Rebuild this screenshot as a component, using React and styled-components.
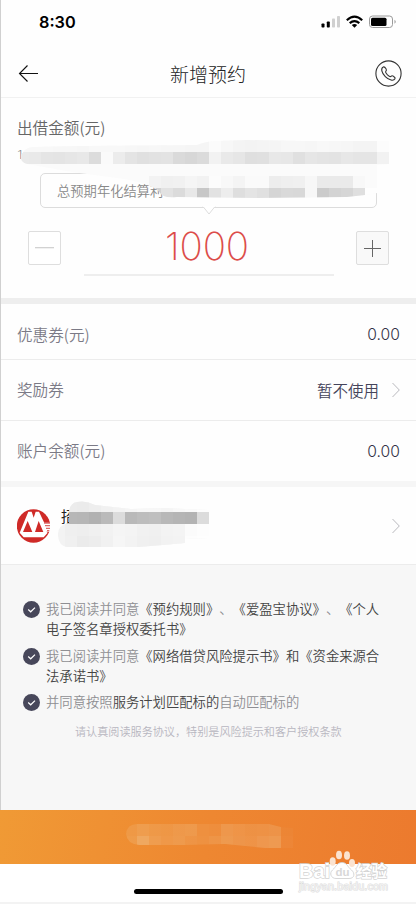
import React from 'react'
import styled, { createGlobalStyle } from 'styled-components'

const GlobalStyle = createGlobalStyle`
  * {
    box-sizing: border-box;
  }
  body {
    margin: 0;
    background: #fff;
    font-family: 'Open Sans', 'Noto Sans CJK SC', sans-serif;
    font-weight: 300;
    color: #333;
    text-spacing-trim: space-all;
  }
  svg {
    display: block;
    flex: none;
  }
`

const Screen = styled.div`
  position: relative;
  width: 416px;
  height: 904px;
  display: flex;
  flex-direction: column;
  overflow: hidden;
  background: #fefefe;
`

const Edge = styled.div`
  position: absolute;
  left: 0;
  top: 0;
  width: 1px;
  height: 810px;
  background: #d0d0d0;
`

const StatusBar = styled.div`
  height: 44px;
  padding: 0 19px 0 39px;
  display: flex;
  align-items: center;
  justify-content: space-between;
`

const Clock = styled.span`
  font: 600 16.3px/20px Inter, sans-serif;
  color: #000;
`

const NavBar = styled.header`
  height: 54px;
  padding: 5px 14px 0 18px;
  display: flex;
  align-items: center;
  justify-content: space-between;
  border-bottom: 1px solid #f1f1f1;
`

const Title = styled.h1`
  margin: 3px 0 0 3px;
  font-size: 19px;
  line-height: 26px;
  font-weight: 300;
  color: #222;
`

const Amount = styled.section`
  position: relative;
  height: 200px;
  padding: 18px 27px 0 17px;
`

const Label = styled.div`
  margin-bottom: 2px;
  font: 350 15.6px/22px 'Noto Sans CJK SC', sans-serif;
  color: ${({ $color }) => $color || '#7b7a86'};
`

const Hint = styled.div`
  height: 33px;
  padding-top: 7px;
  font: 300 12px/16px Roboto, sans-serif;
  color: #777;
`

const Bubble = styled.div`
  position: relative;
  width: 337px;
  height: 35px;
  margin-left: 23px;
  padding-left: 16px;
  border: 1px solid #dcdcdc;
  border-radius: 5px;
  font: 350 13.3px/33px 'Noto Sans CJK SC', sans-serif;
  color: #888;
  svg {
    position: absolute;
    left: 160px;
    bottom: -8px;
  }
`

const Stepper = styled.div`
  display: flex;
  justify-content: space-between;
  margin: 16px 0 0 11px;
  padding-top: 7px;
`

const StepButton = styled.button`
  width: 33px;
  height: 34px;
  padding: 0;
  display: flex;
  align-items: center;
  justify-content: center;
  border: 1px solid #dedede;
  border-radius: 2px;
  background: ${({ $plus }) => ($plus ? '#f9f9f9' : '#fff')};
`

const Value = styled.div`
  width: 250px;
  height: 52px;
  margin-top: -7px;
  border-bottom: 2px solid #eee;
  font: 200 38.5px/45px Inter, sans-serif;
  letter-spacing: -0.1px;
  text-indent: -3px;
  text-align: center;
  color: #dc4d4a;
`

const Gap = styled.div`
  height: 6px;
  background: ${({ $color }) => $color};
`

const Row = styled.div`
  height: ${({ $height }) => $height}px;
  padding: ${({ $top }) => $top || 0}px 16px 0 17px;
  display: flex;
  align-items: center;
  justify-content: space-between;
  border-bottom: ${({ $line }) => ($line ? '1px solid #ececec' : 0)};
`

const RowValue = styled.div`
  display: flex;
  align-items: center;
  gap: 13px;
  font: 350 15.5px/22px 'Noto Sans CJK SC', sans-serif;
  color: #45445a;
`

const Money = styled.span`
  padding-top: 1px;
  font: 300 15.7px/22px Inter, sans-serif;
  color: #333248;
`

const Bank = styled.section`
  position: relative;
  height: 78px;
  padding: 0 16px 0 17px;
  display: flex;
  align-items: center;
  border-bottom: 1px solid #ececec;
`

const BankName = styled.div`
  flex: 1;
  margin: 0 0 19px 11px;
  font-size: 15px;
  line-height: 20px;
  font-weight: 400;
  color: #222;
`

const Terms = styled.section`
  height: 245px;
  padding: 34px 0 0 23px;
  background: #f7f7f7;
`

const Term = styled.div`
  display: flex;
  gap: 6px;
  margin-bottom: 6.5px;
  svg {
    margin-top: 2px;
  }
`

const TermText = styled.div`
  font: 350 13.33px/20px 'Noto Sans CJK SC', sans-serif;
  font-kerning: none;
  white-space: nowrap;
  color: #8f8f93;
  b {
    font-weight: 350;
    color: #444;
  }
`

const Note = styled.div`
  margin: 10px 0 0 52px;
  font: 350 11.12px/18px 'Noto Sans CJK SC', sans-serif;
  color: #b7b6c0;
  white-space: nowrap;
`

const Submit = styled.div`
  position: relative;
  height: 54px;
  background: linear-gradient(100deg, #f09a35, #ee8731 50%, #ec7a2e);
`

const HomeArea = styled.footer`
  height: 40px;
  padding-top: 25px;
  border-bottom: 2px solid #f3f3f3;
  background: #fff;
`

const HomeBar = styled.div`
  width: 149px;
  height: 5px;
  margin-left: 134px;
  border-radius: 3px;
  background: #000;
`

const Overlay = styled.svg`
  position: absolute;
  left: ${({ $x }) => $x}px;
  top: ${({ $y }) => $y}px;
`

// rows: [start column, [colours]], one cell is 12px
const Mosaic = ({ id, x, y, width, height, base, shape, rows }) => (
  <Overlay $x={x} $y={y} width={width} height={height}>
    <clipPath id={id}>
      <path d={shape} />
    </clipPath>
    <g clipPath={`url(#${id})`} shapeRendering='crispEdges'>
      {base && <rect width={width} height={height} fill={base} />}
      {rows.map(([start, cells], r) =>
        cells.map((fill, c) => (
          <rect key={`${r}-${c}`} x={(start + c) * 12} y={r * 12} width='12' height='12' fill={fill} />
        ))
      )}
    </g>
  </Overlay>
)

const grays = str => str.split(' ').map(v => `#${v}${v}${v}`)
const glows = str => str.split(' ').map(v => `rgba(240,200,150,${v / 100})`)

const Chevron = () => (
  <svg width='8' height='16' viewBox='0 0 8 16' fill='none' stroke='#b9b9be'>
    <path d='M0.5 1L7.3 8L0.5 15' />
  </svg>
)

const Check = () => (
  <svg width='17' height='17' viewBox='0 0 17 17'>
    <circle cx='8.5' cy='8.5' r='8.5' fill='#47475a' />
    <path d='M5.2 8.5L7.7 10.8L12 6.6' fill='none' stroke='#fff' strokeWidth='1.2' />
  </svg>
)

const StatusIcons = () => (
  <svg width='76' height='14' viewBox='0 0 76 14'>
    <rect x='0.5' y='8.5' width='3' height='4' rx='0.8' />
    <rect x='5.8' y='6.5' width='3' height='6' rx='0.8' />
    <rect x='11' y='3.5' width='3' height='9' rx='0.8' fill='#d0d0d0' />
    <rect x='16' y='1' width='3' height='11.5' rx='0.8' fill='#d0d0d0' />
    <g fill='none' stroke='#000' strokeWidth='2.2'>
      <path d='M25.8 5.2Q33.5 -1.8 41.2 5.2' />
      <path d='M28.7 8.1Q33.5 4 38.3 8.1' />
    </g>
    <path d='M30.8 10Q33.5 7.9 36.2 10L33.5 12.7Z' />
    <rect x='48.5' y='1' width='23' height='11.5' rx='3' fill='none' stroke='#9a9a9a' />
    <rect x='50' y='2.7' width='15.5' height='8.2' rx='1.5' />
    <path d='M73.5 4.8Q76 6.7 73.5 8.8Z' fill='#9a9a9a' />
  </svg>
)

const BankLogo = () => (
  <svg width='33' height='34' viewBox='0 0 99 102'>
    <circle cx='49.5' cy='51' r='50' fill='#cf2a27' />
    <path d='M8 71L34 8H44L50 26L56 8H66L82 42H99V68H88L92 71L80 85H20Z' fill='#fff' />
    <path d='M18 69L32 36L46 69ZM54 69L65 36L79 69Z' fill='#cf2a27' />
    <path d='M81 42H99M84 50H99M87 58H99M90 65H97' stroke='#dc6a68' strokeWidth='4' />
  </svg>
)

const Watermark = () => (
  <Overlay $x={294} $y={846} width='100' height='50' fill='#fff' stroke='#d2d2d2' strokeWidth='1.4'>
    <g fontFamily='Liberation Sans, sans-serif' fontWeight='700' paintOrder='stroke'>
      <text x='5' y='32' fontSize='20' textLength='31' lengthAdjust='spacingAndGlyphs'>
        Bai
      </text>
      <text x='62' y='31' fontSize='15.5' fontFamily='Noto Sans CJK SC, sans-serif'>
        经验
      </text>
      <text x='5' y='44' fontSize='10.7' fontWeight='400' textLength='89' fill='#f4f4f4' stroke='#dcdcdc' strokeWidth='1'>
        jingyan.baidu.com
      </text>
    </g>
    <path
      strokeWidth='0.9'
      d='M48 16.5C43 16.5 42 21 38.5 24C35 27 37 32.5 42 32.5H55C61 32.5 61 27 57.5 24C53.5 21 53 16.5 48 16.5Z'
    />
    <g stroke='none' fill='#fbe3d0'>
      <ellipse cx='38.7' cy='15.5' rx='3' ry='4.2' />
      <ellipse cx='45' cy='9' rx='3' ry='4.3' />
      <ellipse cx='53' cy='9.5' rx='3' ry='4.3' />
      <ellipse cx='58' cy='17' rx='3' ry='4' />
    </g>
    <text
      x='41.5'
      y='30'
      fontSize='11.5'
      fontWeight='700'
      fontFamily='Liberation Sans, sans-serif'
      fill='#d8d8d8'
      stroke='none'
    >
      du
    </text>
  </Overlay>
)

export default function App() {
  return (
    <Screen>
      <GlobalStyle />
      <StatusBar>
        <Clock>8:30</Clock>
        <StatusIcons />
      </StatusBar>
      <NavBar>
        <svg width='20' height='18' viewBox='0 0 20 18' fill='none' stroke='#111' strokeWidth='1.1'>
          <path d='M9.5 1.5L1.5 9.5L9.5 17.5M1.5 9.5H20' />
        </svg>
        <Title>新增预约</Title>
        <svg width='27' height='27' viewBox='0 0 27 27' fill='none' stroke='#333' strokeWidth='1.1'>
          <circle cx='13.5' cy='13.5' r='12.6' />
          <path d='M8.2 7.1C5.6 8.3 6.5 12.8 10.3 16.6C14.1 20.4 18.6 21.3 20 18.8C20.7 17.7 20 17.3 18.5 16.3C17.3 15.4 16.9 15.4 16 16.4C15.2 17.1 14.4 16.6 12.5 14.8C10.7 12.9 10.1 12.1 10.8 11.3C11.8 10.4 11.8 10 11 8.7C10 7.2 9.4 6.4 8.2 7.1Z' />
        </svg>
      </NavBar>

      <Amount>
        <Label $color='#666'>出借金额(元)</Label>
        <Hint>1</Hint>
        <Bubble>
          总预期年化结算利
          <svg width='16' height='9' viewBox='0 0 16 9' fill='#fff' stroke='#dcdcdc'>
            <path d='M2 0.5L8 8L14 0.5' />
            <path d='M2 0.5H14' stroke='#fff' />
          </svg>
        </Bubble>
        <Mosaic
          id='rate'
          x={17}
          y={42}
          width={372}
          height={60}
          base='#fbfbfb'
          shape='M4 18Q5 8 16 7L60 6L180 5Q190 1 200 1L230 0L290 1H372V24L360 25V53L348 55L330 57L240 58L160 57Q145 59 141 50Q128 42 100 38L55 32L10 24Q4 22 4 18Z'
          rows={[
            [0, grays('f8 f8 f8 f7 f7 f6 f8 f8 f8 f7 f6 f7 f6 f6 f5 f5 fb f7 f4 f3 f4 f5 f7 f7 f6 f8 f7 f6 f4 f4 fc')],
            [0, grays('ea e9 e5 e4 e6 e8 dc fa ec e4 e0 e2 e3 da d7 db f2 e9 e6 df e0 e8 e7 e0 e6 e4 e3 e7 e5 e5 f2')],
            [0, []],
            [11, grays('f3 f0 f1 f5 f2 fc f8 f4 fa fa ed ef f0 f7 ea ea ea f8 fb')],
            [11, grays('d2 e2 db e8 c7 e2 ed de e4 e0 d5 d9 d8 f7 cb d3 d6 df fe')]
          ]}
        />
        <Stepper>
          <StepButton>
            <svg width='19' height='2' viewBox='0 0 19 2'>
              <rect width='19' height='1.3' fill='#d2d2d2' />
            </svg>
          </StepButton>
          <Value>1000</Value>
          <StepButton $plus>
            <svg width='17' height='17' viewBox='0 0 17 17' stroke='#666'>
              <path d='M8.5 0V17M0 8.5H17' />
            </svg>
          </StepButton>
        </Stepper>
      </Amount>

      <Gap $color='#eeeeee' />
      <Row $height={56} $top={6} $line>
        <Label>优惠券(元)</Label>
        <RowValue>
          <Money>0.00</Money>
        </RowValue>
      </Row>
      <Row $height={61} $line>
        <Label>奖励券</Label>
        <RowValue>
          暂不使用
          <Chevron />
        </RowValue>
      </Row>
      <Row $height={60}>
        <Label>账户余额(元)</Label>
        <RowValue>
          <Money>0.00</Money>
        </RowValue>
      </Row>
      <Gap $color='#f6f6f6' />

      <Bank>
        <BankLogo />
        <BankName>招</BankName>
        <Chevron />
        <Mosaic
          id='bank'
          x={53}
          y={13}
          width={156}
          height={48}
          base='#f3f3f3'
          shape='M5 36Q4 25 16 23V12Q17 3 24 2Q33 0 42 5L78 9L110 8L156 10V38L132 39V43L110 45L85 47H14Q6 46 5 36Z'
          rows={[
            [1, grays('ec eb ee f1 f3 f5 f7 f7 f5 f8 fa fd')],
            [1, grays('b7 b6 b1 ba dc b9 bd bf b8 b5 b3 dc')],
            [1, grays('ef ee f0 f2 f5 f4 f1 f0 f3 f4 fb fd')],
            [1, grays('f0 eb ed f1 f6 f3 f0 ef f2 f3 fd fe')]
          ]}
        />
      </Bank>

      <Terms>
        <Term>
          <Check />
          <TermText>
            我已阅读并同意<b>《预约规则》</b>、<b>《爱盈宝协议》</b>、<b>《个人</b>
            <br />
            <b>电子签名章授权委托书》</b>
          </TermText>
        </Term>
        <Term>
          <Check />
          <TermText>
            我已阅读并同意<b>《网络借贷风险提示书》和《资金来源合</b>
            <br />
            <b>法承诺书》</b>
          </TermText>
        </Term>
        <Term>
          <Check />
          <TermText>
            并同意按照<b>服务计划匹配标的</b>自动匹配标的
          </TermText>
        </Term>
        <Note>请认真阅读服务协议，特别是风险提示和客户授权条款</Note>
      </Terms>

      <Submit>
        <Mosaic
          id='submit'
          x={125}
          y={14}
          width={168}
          height={24}
          shape='M1 10Q2 0 12 0H144L156 3L168 4V24H140L120 22L100 20L60 21H14Q2 20 1 10Z'
          rows={[
            [0, glows('20 28 22 20 25 27 14 12 27 23 20 21 24 5')],
            [0, glows('24 46 29 23 27 20 16 22 31 25 23 29 33 7')]
          ]}
        />
      </Submit>
      <HomeArea>
        <HomeBar />
      </HomeArea>
      <Watermark />
      <Edge />
    </Screen>
  )
}
